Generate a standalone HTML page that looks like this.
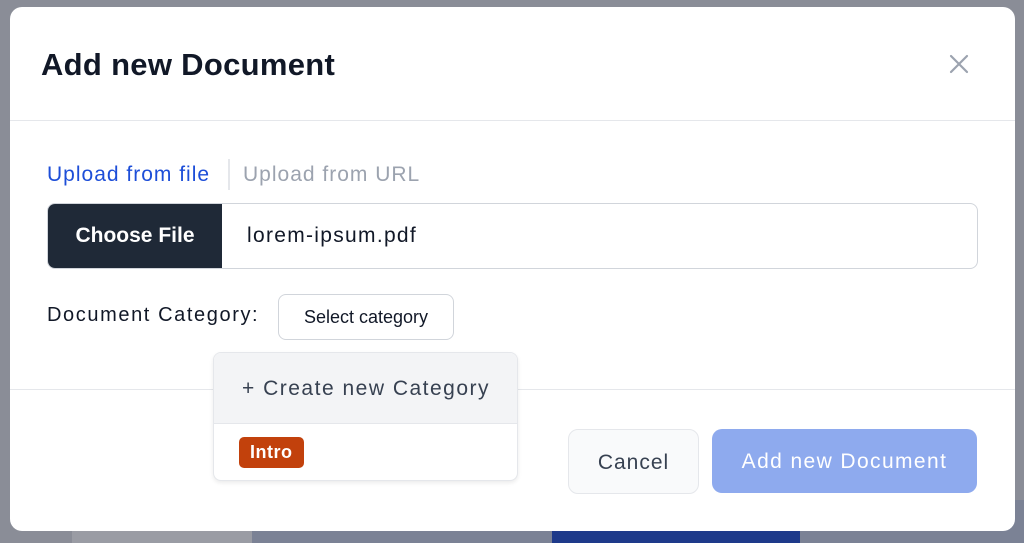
<!DOCTYPE html>
<html><head><style>
body{margin:0;width:1024px;height:543px;overflow:hidden;background:#8a8d97;font-family:"Liberation Sans",sans-serif;position:relative}
.bg1{position:absolute;left:72px;top:500px;width:180px;height:43px;background:#9a9ca4}
.bg2{position:absolute;left:252px;top:500px;width:772px;height:43px;background:#7b8295}
.bgb{position:absolute;left:552px;top:505px;width:248px;height:38px;background:#1e3a8a}
.m{position:absolute;left:10px;top:7px;width:1005px;height:524px;background:#fff;border-radius:12px;overflow:hidden}
h1{position:absolute;left:31px;top:40px;margin:0;font-size:31px;letter-spacing:.3px;font-weight:bold;color:#111827}
.x{position:absolute;left:939px;top:47px}
.hr{position:absolute;left:0;width:1005px;height:1px;background:#e5e7eb}
.t{position:absolute;top:156px;font-size:21px;letter-spacing:1px}
.file{position:absolute;left:37px;top:196px;width:929px;height:64px;border:1px solid #d1d5db;border-radius:8px;overflow:hidden}
.cf{position:absolute;left:0;top:0;width:174px;height:64px;background:#1f2937;color:#fff;font-size:21px;font-weight:bold;line-height:64px;text-align:center}
.fn{position:absolute;left:199px;top:0;line-height:64px;font-size:21px;letter-spacing:1.3px;color:#111827}
.lbl{position:absolute;left:37px;top:297px;font-size:20px;letter-spacing:1.6px;color:#111827}
.sel{position:absolute;left:268px;top:287px;width:174px;height:44px;border:1px solid #d1d5db;border-radius:8px;font-size:18px;line-height:44px;text-align:center;color:#111827}
.dd{position:absolute;left:203px;top:345px;width:303px;height:127px;border:1px solid #e5e7eb;border-radius:8px;background:#fff;box-shadow:0 2px 4px rgba(0,0,0,.08);overflow:hidden}
.dd .c{height:70px;background:#f3f4f6;border-bottom:1px solid #e5e7eb;line-height:72px;font-size:21px;letter-spacing:1.5px;color:#374151;padding-left:28px}
.tag{position:absolute;left:25px;top:84px;background:#c2410c;color:#fff;font-weight:bold;font-size:18px;letter-spacing:.5px;padding:0 11px;height:31px;line-height:31px;border-radius:5px}
.cancel{position:absolute;left:558px;top:422px;width:129px;height:63px;border:1px solid #e5e7eb;border-radius:10px;background:#f9fafb;font-size:21px;letter-spacing:1px;line-height:65px;text-align:center;color:#374151}
.add{position:absolute;left:702px;top:422px;width:265px;height:64px;border-radius:10px;background:#8eaaee;font-size:21px;letter-spacing:1.4px;line-height:66px;text-align:center;color:#fff}
</style></head><body>
<div class="bg1"></div><div class="bg2"></div><div class="bgb"></div>
<div class="m">
<h1>Add new Document</h1>
<svg class="x" width="20" height="20" viewBox="0 0 20 20"><path d="M2 2L18 18M18 2L2 18" stroke="#9ca3af" stroke-width="2.2" stroke-linecap="round"/></svg>
<div class="hr" style="top:113px"></div>
<div class="t" style="left:37px;color:#1d4ed8">Upload from file</div>
<div style="position:absolute;left:218px;top:152px;width:2px;height:31px;background:#e5e7eb"></div>
<div class="t" style="left:233px;color:#9ca3af">Upload from URL</div>
<div class="file"><div class="cf">Choose File</div><div class="fn">lorem-ipsum.pdf</div></div>
<div class="lbl">Document Category:</div>
<div class="sel">Select category</div>
<div class="hr" style="top:382px"></div>
<div class="cancel">Cancel</div>
<div class="add">Add new Document</div>
<div class="dd"><div class="c">+ Create new Category</div><div class="tag">Intro</div></div>
</div>
</body></html>
